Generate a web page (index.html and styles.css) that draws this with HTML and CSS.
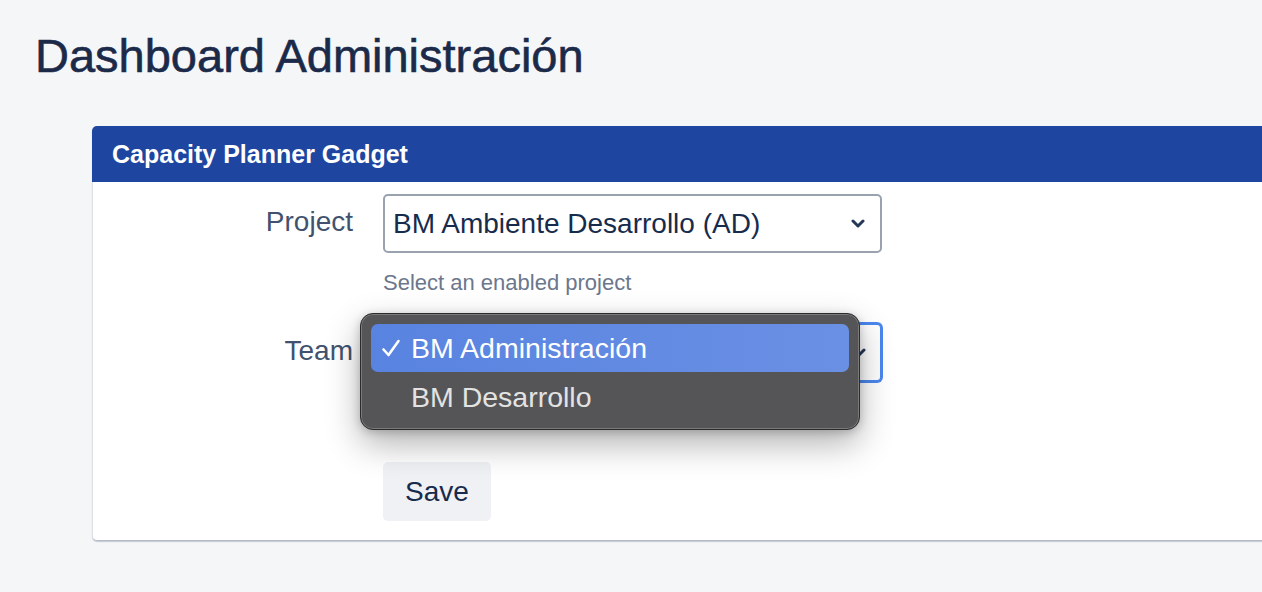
FILE: index.html
```html
<!DOCTYPE html>
<html lang="es">
<head>
<meta charset="utf-8">
<title>Dashboard Administración</title>
<link rel="stylesheet" href="styles.css">
</head>
<body>
  <h1 class="page-title">Dashboard Administración</h1>

  <section class="gadget">
    <header class="gadget-header">Capacity Planner Gadget</header>

    <form class="gadget-form">
      <div class="field">
        <label class="field-label">Project</label>
        <div class="field-control">
          <div class="select">
            <span class="select-value">BM Ambiente Desarrollo (AD)</span>
            <svg class="chevron" width="14" height="9" viewBox="0 0 14 9"><path d="M2 2 L7 7 L12 2" fill="none" stroke="#253858" stroke-width="3" stroke-linecap="round" stroke-linejoin="round"/></svg>
          </div>
          <p class="help">Select an enabled project</p>
        </div>
      </div>

      <div class="field field-team">
        <label class="field-label">Team</label>
        <div class="field-control">
          <div class="select is-focused">
            <span class="select-value">BM Administración</span>
            <svg class="chevron" width="14" height="9" viewBox="0 0 14 9"><path d="M2 2 L7 7 L12 2" fill="none" stroke="#253858" stroke-width="3" stroke-linecap="round" stroke-linejoin="round"/></svg>
          </div>

          <ul class="menu">
            <li class="menu-item is-selected">
              <svg class="check" width="20" height="20" viewBox="0 0 20 20"><path d="M2.5 11.5 L7.5 17 L17.5 3" fill="none" stroke="#fff" stroke-width="2.6" stroke-linecap="round" stroke-linejoin="round"/></svg>
              <span>BM Administración</span>
            </li>
            <li class="menu-item">
              <span class="check-space"></span>
              <span>BM Desarrollo</span>
            </li>
          </ul>
        </div>
      </div>

      <div class="actions">
        <button type="button" class="btn">Save</button>
      </div>
    </form>
  </section>
</body>
</html>
```

FILE: styles.css
```css
html, body {
  margin: 0;
  padding: 0;
  overflow: hidden;
}

body {
  background: #f5f6f8;
  font-family: "Liberation Sans", Arial, sans-serif;
  color: #172b4d;
  width: 1262px;
  height: 592px;
}

.page-title {
  margin: 28px 0 42px 35px;
  font-size: 47px;
  line-height: 56px;
  font-weight: 400;
  color: #1c2a4a;
  -webkit-text-stroke: 0.6px #1c2a4a;
  white-space: nowrap;
}

.gadget {
  margin-left: 92px;
  width: 1220px;
  background: #fff;
  border: 1px solid #dfe1e6;
  border-bottom-color: #b6bcc7;
  border-radius: 5px;
  box-shadow: 0 1px 1px rgba(9, 30, 66, 0.2);
}

.gadget-header {
  height: 56px;
  margin: -1px -1px 0 -1px;
  padding-left: 20px;
  background: #1e46a0;
  border-radius: 5px 5px 0 0;
  color: #fff;
  font-weight: 700;
  font-size: 25px;
  line-height: 57px;
}

.gadget-form {
  padding: 12px 0 19px 0;
}

.field {
  display: flex;
  align-items: flex-start;
  column-gap: 30px;
}

.field-team {
  margin-top: 28px;
}

.field-label {
  width: 260px;
  text-align: right;
  font-size: 28px;
  line-height: 56px;
  color: #42526e;
}

.field-control {
  position: relative;
  width: 499px;
}

.select {
  box-sizing: border-box;
  height: 59px;
  display: flex;
  align-items: center;
  justify-content: space-between;
  padding: 0 15px 0 8px;
  border: 2px solid #9aa2b0;
  border-radius: 5px;
  background: #fff;
  font-size: 28px;
  color: #172b4d;
}

.select.is-focused {
  border-color: #4b87ef;
  box-shadow: 0 0 0 1px #4b87ef;
  padding-right: 14px;
}

.select-value {
  white-space: nowrap;
}

.chevron {
  display: block;
}

.help {
  margin: 18px 0 0 0;
  font-size: 22px;
  line-height: 24px;
  color: #6b778c;
}

.actions {
  margin: 80px 0 0 290px;
}

.btn {
  width: 108px;
  height: 59px;
  border: none;
  border-radius: 5px;
  background: #eff1f4;
  font-family: "Liberation Sans", Arial, sans-serif;
  font-size: 28px;
  color: #172b4d;
  padding: 0;
}

/* native popup list opened over the team select */
.menu {
  position: absolute;
  left: -23px;
  top: -10px;
  box-sizing: border-box;
  width: 500px;
  height: 117px;
  margin: 0;
  padding: 10px 10px;
  list-style: none;
  background: #555557;
  border: 1px solid #2b2b2d;
  border-radius: 13px;
  box-shadow:
    inset 0 0 0 1px rgba(255, 255, 255, 0.22),
    0 14px 34px rgba(0, 0, 0, 0.3),
    0 2px 10px rgba(0, 0, 0, 0.2);
}

.menu-item {
  height: 48px;
  display: flex;
  align-items: center;
  padding-left: 10px;
  border-radius: 7px;
  font-size: 28.5px;
  color: #e3e3e3;
  white-space: nowrap;
}

.menu-item.is-selected {
  background: linear-gradient(90deg, #5883e0, #6a90e4);
  color: #fff;
}

.menu-item + .menu-item {
  margin-top: 1px;
}

.check {
  display: block;
  flex: none;
  margin-right: 10px;
}

.check-space {
  display: block;
  flex: none;
  width: 30px;
}
```
